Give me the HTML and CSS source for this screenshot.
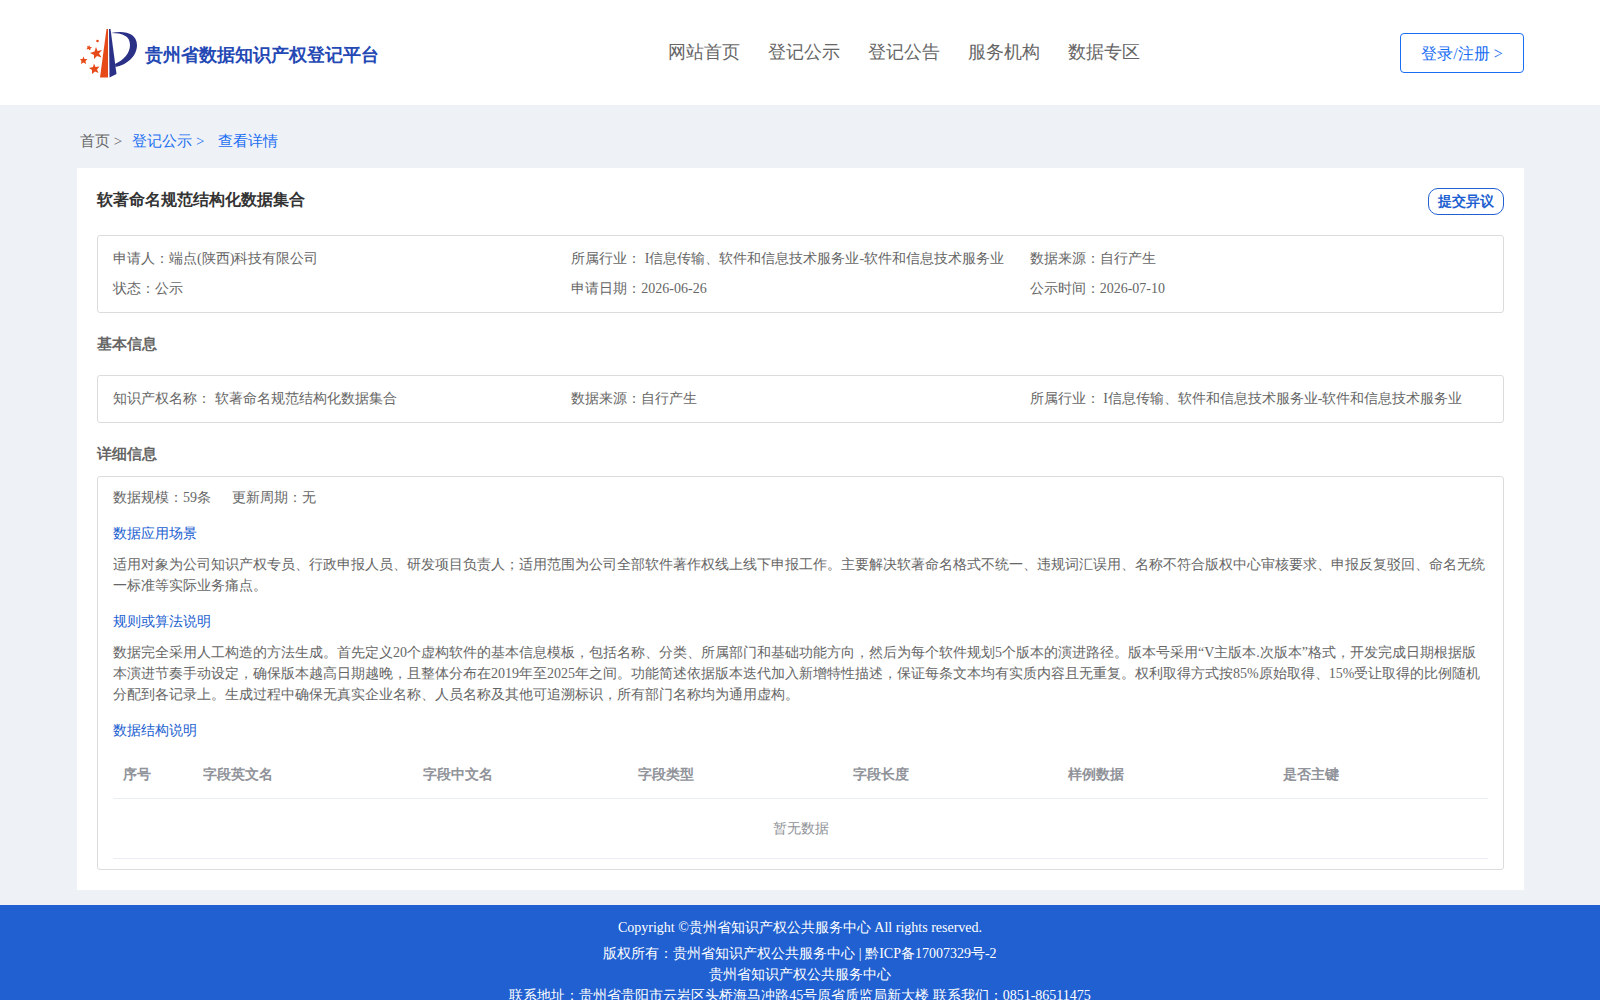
FILE: index.html
```html
<!DOCTYPE html>
<html>
<head>
<meta charset="utf-8">
<title>贵州省数据知识产权登记平台</title>
<link rel="stylesheet" href="styles.css">
</head>
<body>
<header class="header">
  <div class="header-inner">
    <a class="brand" href="#">
      <svg class="brand-mark" viewBox="0 0 58 50" aria-hidden="true">
        <path fill="#e64a19" d="M26.500 1 H28 V49.500 H20 Z"/>
        <path fill="#2b3087" d="M29 1 H30.500 L36.500 46 L29.500 49.500 Z"/>
        <path fill="#2b3087" d="M31 5 C44 2 57 5 57 17 C57 29 46 37 35.500 39 L35 36 C44 32 50 25 50 17 C50 8 43 5 31 5 Z"/>
        <g fill="#e64a19">
          <path d="M16 19 L17.500 23 L22 22 L19 25.500 L21.500 29.500 L17 28 L14 31 L14 27 L10 25 L14.500 23.500 Z"/>
          <path d="M14 35.500 L15.500 39 L19.500 38.500 L17 41.500 L18.500 45 L15 43.500 L12 46 L12 42 L9 40 L13 39 Z"/>
          <path d="M3.500 28.500 L4.500 31 L7.500 31 L5.500 33 L6 36 L3.500 34.500 L1 36 L1.500 33 L0 31 L2.500 31 Z"/>
          <path d="M9 17 L10 19 L12 19 L10.500 20.500 L10 22.500 L8.500 21 L6.500 21.500 L7.500 19.500 L7 18 L8.500 18.500 Z"/>
          <circle cx="17.500" cy="13" r="1.300"/>
        </g>
      </svg>
      <span class="brand-name">贵州省数据知识产权登记平台</span>
    </a>
    <nav class="nav">
      <a href="#">网站首页</a>
      <a href="#">登记公示</a>
      <a href="#">登记公告</a>
      <a href="#">服务机构</a>
      <a href="#">数据专区</a>
    </nav>
    <button class="login" type="button">登录/注册 &gt;</button>
  </div>
</header>

<main class="main">
  <nav class="crumbs" aria-label="面包屑">
    <a href="#">首页 &gt;</a>
    <a class="active" href="#">登记公示 &gt;</a>
    <a class="active current" href="#">查看详情</a>
  </nav>

  <article class="card">
    <div class="card-head">
      <h1 class="title">软著命名规范结构化数据集合</h1>
      <button class="objection" type="button">提交异议</button>
    </div>

    <div class="box facts">
      <span>申请人：端点(陕西)科技有限公司</span>
      <span>所属行业： I信息传输、软件和信息技术服务业-软件和信息技术服务业</span>
      <span>数据来源：自行产生</span>
      <span>状态：公示</span>
      <span>申请日期：2026-06-26</span>
      <span>公示时间：2026-07-10</span>
    </div>

    <h2 class="section basic">基本信息</h2>
    <div class="box facts">
      <span>知识产权名称： 软著命名规范结构化数据集合</span>
      <span>数据来源：自行产生</span>
      <span>所属行业： I信息传输、软件和信息技术服务业-软件和信息技术服务业</span>
    </div>

    <h2 class="section">详细信息</h2>
    <div class="box detail">
      <div class="scale"><span>数据规模：59条</span><span>更新周期：无</span></div>
      <h3 class="sub">数据应用场景</h3>
      <p class="text">适用对象为公司知识产权专员、行政申报人员、研发项目负责人；适用范围为公司全部软件著作权线上线下申报工作。主要解决软著命名格式不统一、违规词汇误用、名称不符合版权中心审核要求、申报反复驳回、命名无统一标准等实际业务痛点。</p>
      <h3 class="sub">规则或算法说明</h3>
      <p class="text">数据完全采用人工构造的方法生成。首先定义20个虚构软件的基本信息模板，包括名称、分类、所属部门和基础功能方向，然后为每个软件规划5个版本的演进路径。版本号采用“V主版本.次版本”格式，开发完成日期根据版本演进节奏手动设定，确保版本越高日期越晚，且整体分布在2019年至2025年之间。功能简述依据版本迭代加入新增特性描述，保证每条文本均有实质内容且无重复。权利取得方式按85%原始取得、15%受让取得的比例随机分配到各记录上。生成过程中确保无真实企业名称、人员名称及其他可追溯标识，所有部门名称均为通用虚构。</p>
      <h3 class="sub">数据结构说明</h3>
      <table class="fields">
        <thead>
          <tr>
            <th class="col-index">序号</th>
            <th class="col-name">字段英文名</th>
            <th>字段中文名</th>
            <th>字段类型</th>
            <th>字段长度</th>
            <th>样例数据</th>
            <th>是否主键</th>
          </tr>
        </thead>
        <tbody>
          <tr><td colspan="7">暂无数据</td></tr>
        </tbody>
      </table>
    </div>
  </article>
</main>

<footer class="footer">
  <p class="copyright">Copyright ©贵州省知识产权公共服务中心 All rights reserved.</p>
  <p>版权所有：贵州省知识产权公共服务中心 | 黔ICP备17007329号-2</p>
  <p>贵州省知识产权公共服务中心</p>
  <p>联系地址：贵州省贵阳市云岩区头桥海马冲路45号原省质监局新大楼 联系我们：0851-86511475</p>
</footer>
</body>
</html>
```
FILE: styles.css
```css
* { box-sizing: border-box; }

body {
  margin: 0;
  background: #eef2f6;
  color: #666;
  font-family: "Liberation Serif", serif;
  font-size: 14px;
  line-height: 21px;
}

h1, h2, h3, p { margin: 0; }
a { color: inherit; text-decoration: none; }
button { font-family: inherit; background: #fff; cursor: pointer; }

.header {
  background: #fff;
  padding: 0 76px 0 77px;
}

.header-inner {
  display: grid;
  grid-template-columns: 20fr auto 13fr;
  align-items: center;
  height: 105px;
}

.brand {
  display: flex;
  align-items: center;
  gap: 7px;
  padding-left: 3px;
}

.brand-mark { width: 58px; height: 50px; }

.brand-name {
  padding-top: 4px;
  color: #2448b4;
  font-size: 18px;
  font-weight: bold;
  line-height: 24px;
}

.nav {
  display: flex;
  gap: 28px;
  padding-bottom: 2px;
  font-size: 18px;
  line-height: 24px;
}

.login {
  justify-self: end;
  width: 124px;
  height: 40px;
  padding: 4px 0 0;
  border: 1px solid #1a6ef2;
  border-radius: 4px;
  color: #1a6ef2;
  font-size: 16px;
}

.main { padding: 0 76px 15px 77px; }

.crumbs {
  display: flex;
  gap: 10px;
  padding: 26px 3px 16px;
  font-size: 15px;
}

.crumbs .active { color: #1a6ef2; }
.crumbs .current { padding-left: 4px; }

.card {
  background: #fff;
  padding: 20px;
}

.card-head {
  display: flex;
  justify-content: space-between;
  align-items: flex-start;
  height: 47px;
}

.title {
  color: #333;
  font-size: 16px;
  line-height: 24px;
}

.objection {
  width: 76px;
  height: 27px;
  padding: 0;
  border: 1px solid #2060d0;
  border-radius: 10px;
  color: #2060d0;
  font-size: 14px;
  font-weight: bold;
}

.box {
  border: 1px solid #dcdcdc;
  border-radius: 3px;
}

.facts {
  display: grid;
  grid-template-columns: repeat(3, 1fr);
  padding: 8px 15px;
  line-height: 30px;
  white-space: nowrap;
}

.section {
  padding: 20px 0 11px;
  font-size: 15px;
  line-height: 22px;
}

.basic { padding-bottom: 20px; }

.detail { padding: 10px 15px; }

.scale { display: flex; gap: 21px; }

.sub {
  padding: 15px 0 10px;
  color: #2060d0;
  font-size: 14px;
  font-weight: normal;
}

.fields {
  width: 100%;
  table-layout: fixed;
  border-collapse: collapse;
  color: #909399;
}

.fields th {
  height: 47px;
  padding: 0 10px;
  border-bottom: 1px solid #ebeef5;
  text-align: left;
}

.fields .col-index { width: 80px; }
.fields .col-name { width: 220px; }

.fields td {
  height: 60px;
  padding: 0;
  border-bottom: 1px solid #ebeef5;
  text-align: center;
}

.footer {
  padding: 12px 0;
  background: #2060d0;
  color: #fff;
  text-align: center;
}

.copyright { padding-bottom: 5px; }
```
